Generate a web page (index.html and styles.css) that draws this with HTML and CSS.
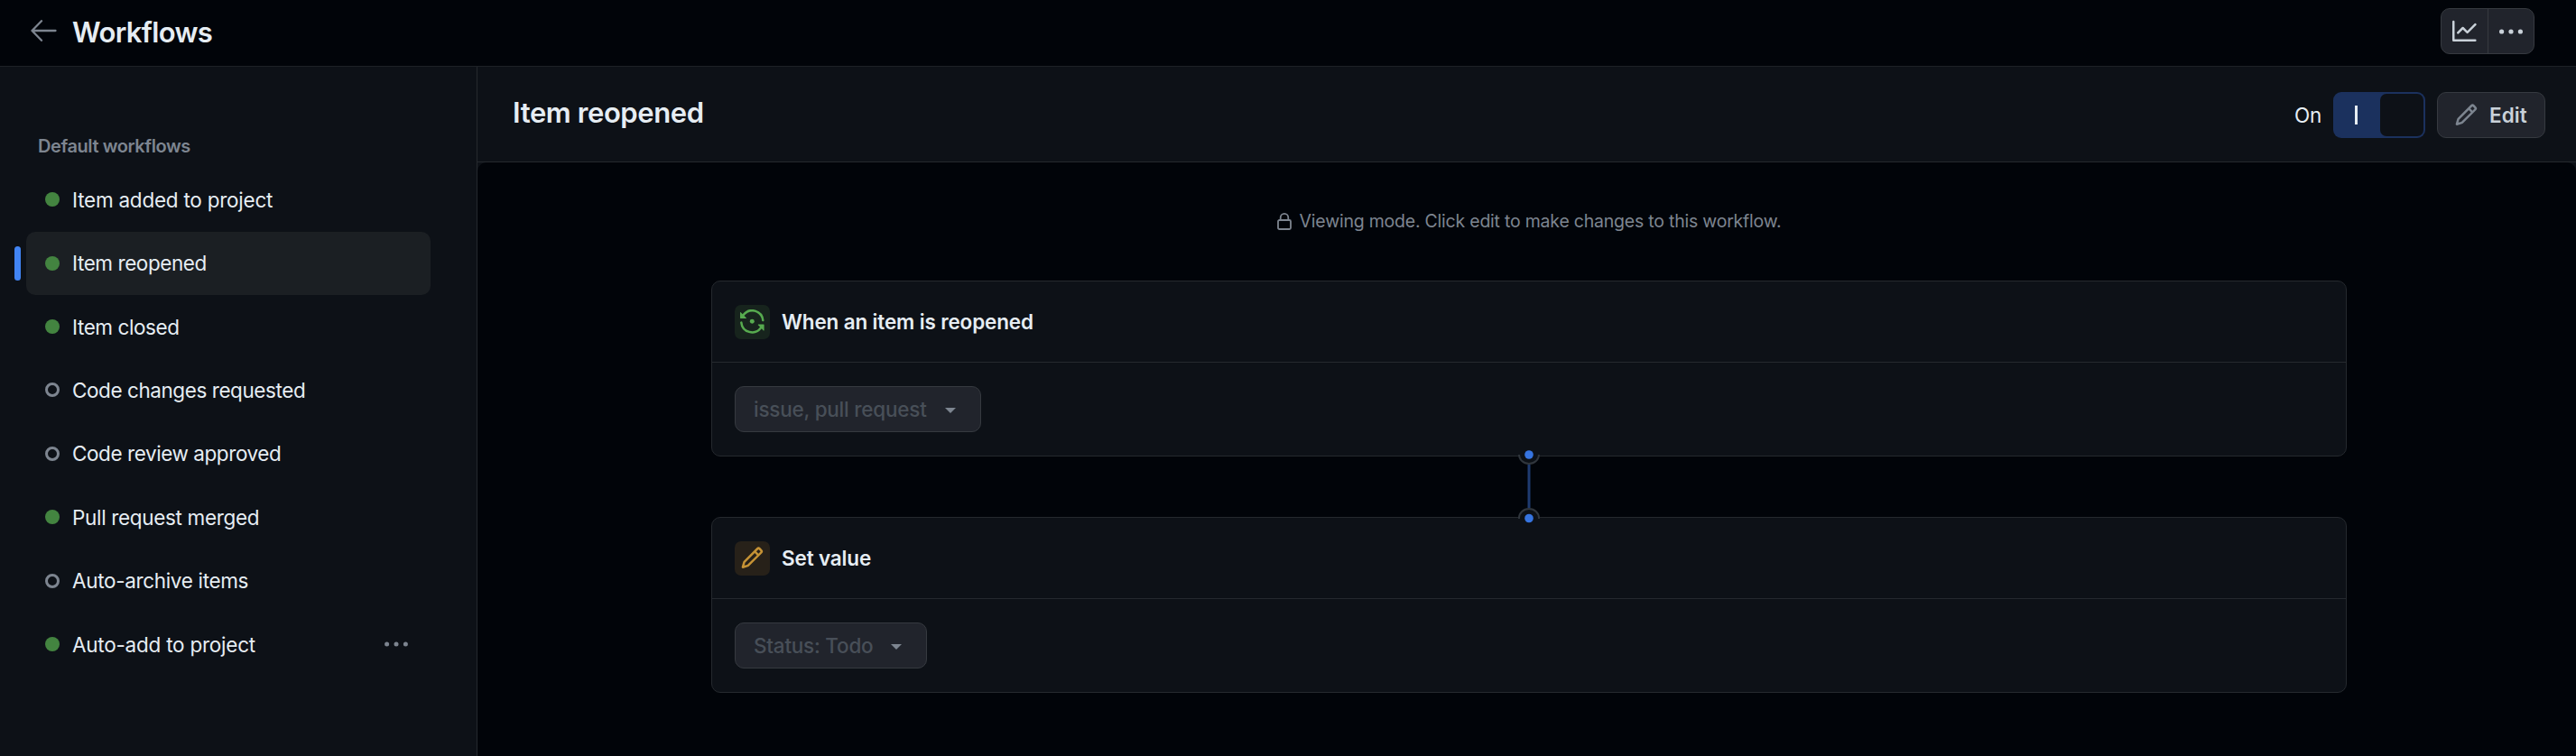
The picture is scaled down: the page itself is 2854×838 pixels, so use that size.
FILE: index.html
```html
<!DOCTYPE html>
<html lang="en">
<head>
<meta charset="utf-8">
<title>Workflows</title>
<link rel="stylesheet" href="styles.css">
</head>
<body>
<header class="topbar">
  <svg class="icon back" viewBox="0 0 29 24"><path d="M12 1.2 1.5 12 12 22.8M1.5 12h26"/></svg>
  <h1 class="topbar-title">Workflows</h1>
  <div class="button-group">
    <button class="group-btn"><svg class="octicon" viewBox="0 0 16 16"><path d="M1.5 1.75V13.5h13.75a.75.75 0 0 1 0 1.5H.75a.75.75 0 0 1-.75-.75V1.75a.75.75 0 0 1 1.5 0Zm14.28 2.53-5.25 5.25a.75.75 0 0 1-1.06 0L7 7.06 4.28 9.78a.75.75 0 0 1-1.06-1.06l3.25-3.25a.75.75 0 0 1 1.06 0L10 7.94l4.72-4.72a.75.75 0 1 1 1.06 1.06Z"/></svg></button>
    <button class="group-btn"><svg class="dots" viewBox="0 0 26 6"><circle cx="2.6" cy="3" r="2.6"/><circle cx="13" cy="3" r="2.6"/><circle cx="23.4" cy="3" r="2.6"/></svg></button>
  </div>
</header>
<div class="layout">
  <nav class="sidebar">
    <h2 class="nav-title">Default workflows</h2>
    <ul class="nav-list">
      <li class="nav-item loose"><i class="dot on"></i><span>Item added to project</span></li>
      <li class="nav-item tight selected"><i class="dot on"></i><span>Item reopened</span></li>
      <li class="nav-item tight"><i class="dot on"></i><span>Item closed</span></li>
      <li class="nav-item tight"><i class="dot"></i><span>Code changes requested</span></li>
      <li class="nav-item tight"><i class="dot"></i><span>Code review approved</span></li>
      <li class="nav-item"><i class="dot on"></i><span>Pull request merged</span></li>
      <li class="nav-item"><i class="dot"></i><span>Auto-archive items</span></li>
      <li class="nav-item loose"><i class="dot on"></i><span>Auto-add to project</span><svg class="dots more" viewBox="0 0 26 6"><circle cx="2.6" cy="3" r="2.5"/><circle cx="13" cy="3" r="2.5"/><circle cx="23.4" cy="3" r="2.5"/></svg></li>
    </ul>
  </nav>
  <main class="main">
    <div class="main-header">
      <h2 class="main-title">Item reopened</h2>
      <span class="state">On</span>
      <div class="toggle"><span class="toggle-line"></span><span class="knob"></span></div>
      <button class="btn edit"><svg class="octicon" viewBox="0 0 16 16"><path d="M11.013 1.427a1.75 1.75 0 0 1 2.474 0l1.086 1.086a1.75 1.75 0 0 1 0 2.474l-8.61 8.61c-.21.21-.47.364-.756.445l-3.251.93a.75.75 0 0 1-.927-.928l.929-3.25c.081-.286.235-.547.445-.758l8.61-8.61Zm.176 4.823L9.75 4.81l-6.286 6.287a.253.253 0 0 0-.064.108l-.558 1.953 1.953-.558a.253.253 0 0 0 .108-.064Zm1.238-3.763a.25.25 0 0 0-.354 0L10.811 3.75l1.439 1.44 1.263-1.263a.25.25 0 0 0 0-.354Z"/></svg><span>Edit</span></button>
    </div>
    <div class="canvas">
      <p class="notice"><svg class="icon lock" viewBox="0 0 16 19"><rect x="1" y="8" width="14" height="10" rx="1.5"/><path d="M3.7 8V5.2a4.3 4.3 0 0 1 8.6 0V8"/></svg><span>Viewing mode. Click edit to make changes to this workflow.</span></p>
      <section class="card">
        <div class="card-head">
          <span class="badge green"><svg class="octicon" viewBox="0 0 16 16"><path d="M5.029 2.217a6.5 6.5 0 0 1 9.437 5.11.75.75 0 1 0 1.492-.154 8 8 0 0 0-14.315-4.03L.427 1.927A.25.25 0 0 0 0 2.104V5.75A.25.25 0 0 0 .25 6h3.646a.25.25 0 0 0 .177-.427L2.715 4.215a6.491 6.491 0 0 1 2.314-1.998ZM1.262 8.169a.75.75 0 0 0-1.22.658 8.001 8.001 0 0 0 14.315 4.03l1.216 1.216a.25.25 0 0 0 .427-.177V10.25a.25.25 0 0 0-.25-.25h-3.646a.25.25 0 0 0-.177.427l1.358 1.358a6.501 6.501 0 0 1-11.751-3.11.75.75 0 0 0-.272-.506Z"/><circle cx="8" cy="8" r="1.5"/></svg></span>
          <h3 class="card-title">When an item is reopened</h3>
        </div>
        <div class="card-body"><button class="btn select"><span>issue, pull request</span><i class="caret"></i></button></div>
      </section>
      <div class="connector">
        <svg class="link" viewBox="0 0 24 82"><path class="cup" d="M1 6a11 10 0 0 0 22 0M1 77v-1a11 10 0 0 1 22 0v1"/><path class="line" d="M12 17v48"/><circle class="node" cx="12" cy="6" r="4.8"/><circle class="node" cx="12" cy="76.5" r="4.8"/></svg>
      </div>
      <section class="card">
        <div class="card-head">
          <span class="badge amber"><svg class="octicon" viewBox="0 0 16 16"><path d="M11.013 1.427a1.75 1.75 0 0 1 2.474 0l1.086 1.086a1.75 1.75 0 0 1 0 2.474l-8.61 8.61c-.21.21-.47.364-.756.445l-3.251.93a.75.75 0 0 1-.927-.928l.929-3.25c.081-.286.235-.547.445-.758l8.61-8.61Zm.176 4.823L9.75 4.81l-6.286 6.287a.253.253 0 0 0-.064.108l-.558 1.953 1.953-.558a.253.253 0 0 0 .108-.064Zm1.238-3.763a.25.25 0 0 0-.354 0L10.811 3.75l1.439 1.44 1.263-1.263a.25.25 0 0 0 0-.354Z"/></svg></span>
          <h3 class="card-title">Set value</h3>
        </div>
        <div class="card-body"><button class="btn select"><span>Status: Todo</span><i class="caret"></i></button></div>
      </section>
    </div>
  </main>
</div>
</body>
</html>
```

FILE: styles.css
```css
* { box-sizing: border-box; }
body {
  margin: 0;
  height: 838px;
  overflow: hidden;
  display: flex;
  flex-direction: column;
  background: #010409;
  color: #e6edf3;
  font-family: Inter, "Liberation Sans", sans-serif;
  font-size: 22.5px;
}
h1, h2, h3, p, ul { margin: 0; padding: 0; }
button { font: inherit; color: inherit; padding: 0; }
svg { display: block; flex: none; }
.icon { fill: none; stroke: currentColor; stroke-linecap: round; stroke-linejoin: round; }
.octicon { width: 26.6px; height: 26.6px; fill: currentColor; }
.dots { width: 26px; height: 6px; fill: currentColor; }

.topbar {
  height: 74px;
  flex: none;
  display: flex;
  align-items: center;
  padding: 0 46px 4px 34px;
  border-bottom: 1px solid #1e2126;
}
.back { width: 29px; height: 24px; margin-bottom: 1px; color: #7d8590; stroke-width: 2.3; }
.topbar-title { margin-left: 17px; font-size: 31px; line-height: 40px; font-weight: 600; letter-spacing: -0.65px; padding-top: 3px; }
.button-group {
  margin-left: auto;
  display: flex;
  width: 104px;
  height: 51px;
  border: 1px solid #363a40;
  border-radius: 10px;
  background: #21242c;
  color: #c9d1d9;
}
.group-btn { flex: 1; border: 0; background: none; display: flex; align-items: center; justify-content: center; }
.group-btn + .group-btn { border-left: 1px solid #363a40; }

.layout { flex: 1; display: flex; min-height: 0; }
.sidebar { width: 529px; flex: none; background: #0d1117; border-right: 1px solid #25292e; padding: 75px 51px 0 29px; }
.nav-title { padding-left: 13px; font-size: 20px; line-height: 26px; font-weight: 600; letter-spacing: -0.42px; color: #7d8590; }
.nav-list { list-style: none; margin-top: 11.2px; display: grid; grid-auto-rows: 70px; row-gap: 0.43px; }
.nav-item { position: relative; display: flex; align-items: center; padding: 0 25px 0 21px; border-radius: 10px; letter-spacing: -0.33px; }
.nav-item.loose { letter-spacing: -0.24px; }
.nav-item.tight { letter-spacing: -0.43px; }
.selected { background: #1b1f23; }
.selected::before { content: ""; position: absolute; left: -13px; top: 16px; width: 7px; height: 38px; border-radius: 4px; background: #4184f3; }
.dot { width: 16px; height: 16px; margin-right: 14px; border: 3px solid #7d8590; border-radius: 50%; }
.dot.on { border: 0; background: #438440; }
.more { margin-left: auto; color: #7d8590; }

.main { flex: 1; display: flex; flex-direction: column; background: #0d1117; min-width: 0; }
.main-header { height: 106px; flex: none; display: flex; align-items: center; padding: 2px 34px 0 39px; border-bottom: 1px solid #25292e; }
.main-title { margin-right: auto; font-size: 31px; line-height: 40px; font-weight: 600; letter-spacing: -0.4px; padding-bottom: 6px; }
.state { margin-right: 13px; letter-spacing: -0.2px; }
.toggle { width: 102px; height: 51px; margin-right: 13px; padding: 2px; border-radius: 9px; background: #1b315e; display: flex; align-items: center; }
.toggle-line { width: 3px; height: 21px; margin: 0 25px 0 22px; background: #e6edf3; }
.knob { width: 48px; height: 47px; border-radius: 7px; background: #0d1117; }
.btn { height: 51px; border: 1px solid #363a40; border-radius: 10px; background: #21242c; display: flex; align-items: center; }
.edit { width: 120px; padding-left: 18px; gap: 12.5px; font-weight: 600; color: #c9d1d9; }
.edit .octicon { color: #7d8590; }

.canvas { flex: 1; background: #010409; border-radius: 10px 10px 0 0; display: flex; flex-direction: column; align-items: center; padding: 51px 0 0 5px; }
.notice { display: flex; align-items: center; gap: 9px; height: 28px; margin-bottom: 52px; font-size: 19.5px; letter-spacing: -0.22px; color: #7d8590; }
.lock { width: 16px; height: 19px; stroke-width: 1.8; }
.card { width: 1812px; height: 195px; flex: none; border: 1px solid #25292e; border-radius: 10px; background: #0d1117; }
.card-head { height: 90px; display: flex; align-items: center; gap: 13px; padding-left: 25px; border-bottom: 1px solid #25292e; }
.badge { width: 39px; height: 38px; border-radius: 7px; display: flex; align-items: center; justify-content: center; }
.green { background: #17241d; color: #57ab4f; }
.amber { background: #272119; color: #c69335; }
.card-title { font-size: 22.5px; font-weight: 600; letter-spacing: -0.15px; }
.card-body { padding: 26px 0 0 25px; }
.select { padding: 0 27px 0 20px; gap: 20px; font-weight: 500; letter-spacing: -0.23px; color: #484f58; }
.caret { border: 6px solid transparent; border-top-color: #7d8590; border-bottom: 0; margin-top: 2px; }
.connector { height: 67px; display: flex; align-items: flex-start; position: relative; z-index: 1; }
.link { width: 24px; height: 82px; margin: -8px 1px 0 0; fill: none; }
.cup { fill: #0d1117; stroke: #30363d; stroke-width: 2; }
.line { stroke: #1f3b70; stroke-width: 3; }
.node { fill: #3674e0; }
```
